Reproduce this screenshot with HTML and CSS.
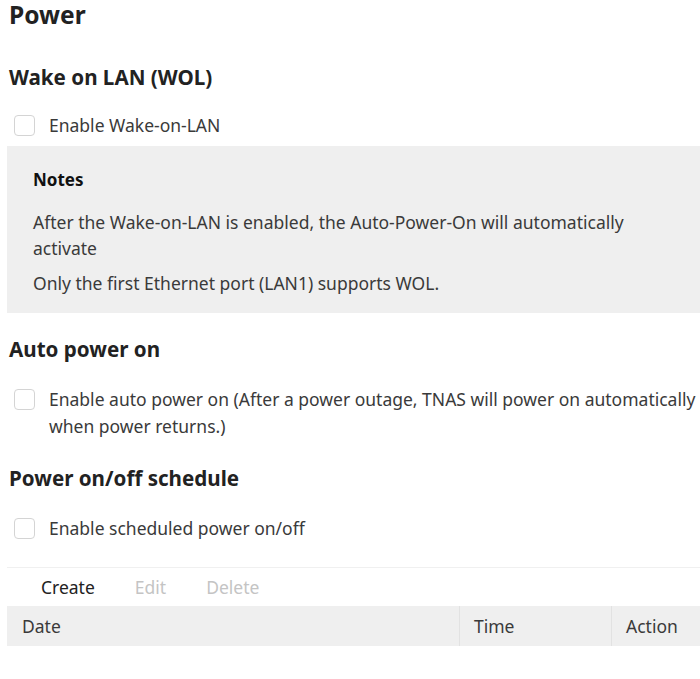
FILE: index.html
```html
<!DOCTYPE html>
<html lang="en">
<head>
<meta charset="utf-8">
<title>Power</title>
<link rel="stylesheet" href="styles.css">
</head>
<body>
<div class="page">
  <h1 class="title">Power</h1>

  <h2 class="section-title sec-wol">Wake on LAN (WOL)</h2>
  <label class="check-row row-wol">
    <span class="checkbox"></span>
    <span class="check-text">Enable Wake-on-LAN</span>
  </label>

  <div class="notes">
    <div class="notes-title">Notes</div>
    <p class="notes-text">After the Wake-on-LAN is enabled, the Auto-Power-On will automatically activate</p>
    <p class="notes-text notes-last">Only the first Ethernet port (LAN1) supports WOL.</p>
  </div>

  <h2 class="section-title sec-auto">Auto power on</h2>
  <label class="check-row row-auto">
    <span class="checkbox"></span>
    <span class="check-text">Enable auto power on (After a power outage, TNAS will power on automatically when power returns.)</span>
  </label>

  <h2 class="section-title sec-sched">Power on/off schedule</h2>
  <label class="check-row row-sched">
    <span class="checkbox"></span>
    <span class="check-text">Enable scheduled power on/off</span>
  </label>

  <div class="divider"></div>

  <div class="toolbar">
    <span class="tool-btn">Create</span>
    <span class="tool-btn disabled">Edit</span>
    <span class="tool-btn disabled">Delete</span>
  </div>

  <div class="table-head">
    <div class="th th-date">Date</div>
    <div class="th th-time">Time</div>
    <div class="th th-action">Action</div>
  </div>
</div>
</body>
</html>
```

FILE: styles.css
```css
html, body {
  margin: 0;
  padding: 0;
  background: #ffffff;
  overflow: hidden;
}

body {
  font-family: "Noto Sans", "Open Sans", sans-serif;
  color: #333333;
  font-size: 17.5px;
}

.page {
  width: 716px;
  padding-left: 7px;
  box-sizing: border-box;
  display: flex;
  flex-direction: column;
}

.title {
  margin: 0;
  padding-left: 2px;
  font-size: 24.5px;
  line-height: 30px;
  font-weight: 700;
  color: #222222;
}

.section-title {
  margin: 0;
  padding-left: 2px;
  font-size: 20.6px;
  line-height: 28px;
  font-weight: 700;
  color: #222222;
}

.sec-wol { margin-top: 33px; }
.sec-auto { margin-top: 22px; }
.sec-sched { margin-top: 24px; }

.check-row {
  display: flex;
  align-items: flex-start;
  gap: 14px;
  padding-left: 7px;
  line-height: 27px;
  font-size: 17.5px;
  color: #3a3a3a;
}

.row-wol { margin-top: 21px; }
.row-auto { margin-top: 23px; }
.row-sched { margin-top: 23px; }

.checkbox {
  flex: none;
  width: 19px;
  height: 19px;
  margin-top: 3px;
  border: 1px solid #d4d4d4;
  border-radius: 4px;
  background: #ffffff;
}

.notes {
  margin-top: 7px;
  background: #efefef;
  padding: 22px 44px 17px 26px;
}

.notes-title {
  font-size: 17px;
  line-height: 24px;
  font-weight: 700;
  color: #111111;
}

.notes-text {
  margin: 17px 0 0 0;
  font-size: 17.5px;
  line-height: 26px;
  color: #3a3a3a;
}

.notes-last {
  margin-top: 9px;
}

.divider {
  margin-top: 25px;
  height: 1px;
  background: #f0f0f0;
}

.toolbar {
  display: flex;
  height: 38px;
  align-items: center;
  padding-left: 14px;
  font-size: 17.5px;
}

.tool-btn {
  padding: 0 20px;
  color: #222222;
}

.tool-btn.disabled {
  color: #c4c4c4;
}

.table-head {
  display: grid;
  grid-template-columns: 452px 152px 1fr;
  height: 40px;
  background: #efefef;
  font-size: 17.5px;
  color: #3a3a3a;
}

.th {
  display: flex;
  align-items: center;
  padding-left: 15px;
}

.th-time,
.th-action {
  border-left: 1px solid #e2e2e2;
  padding-left: 14px;
}
```
